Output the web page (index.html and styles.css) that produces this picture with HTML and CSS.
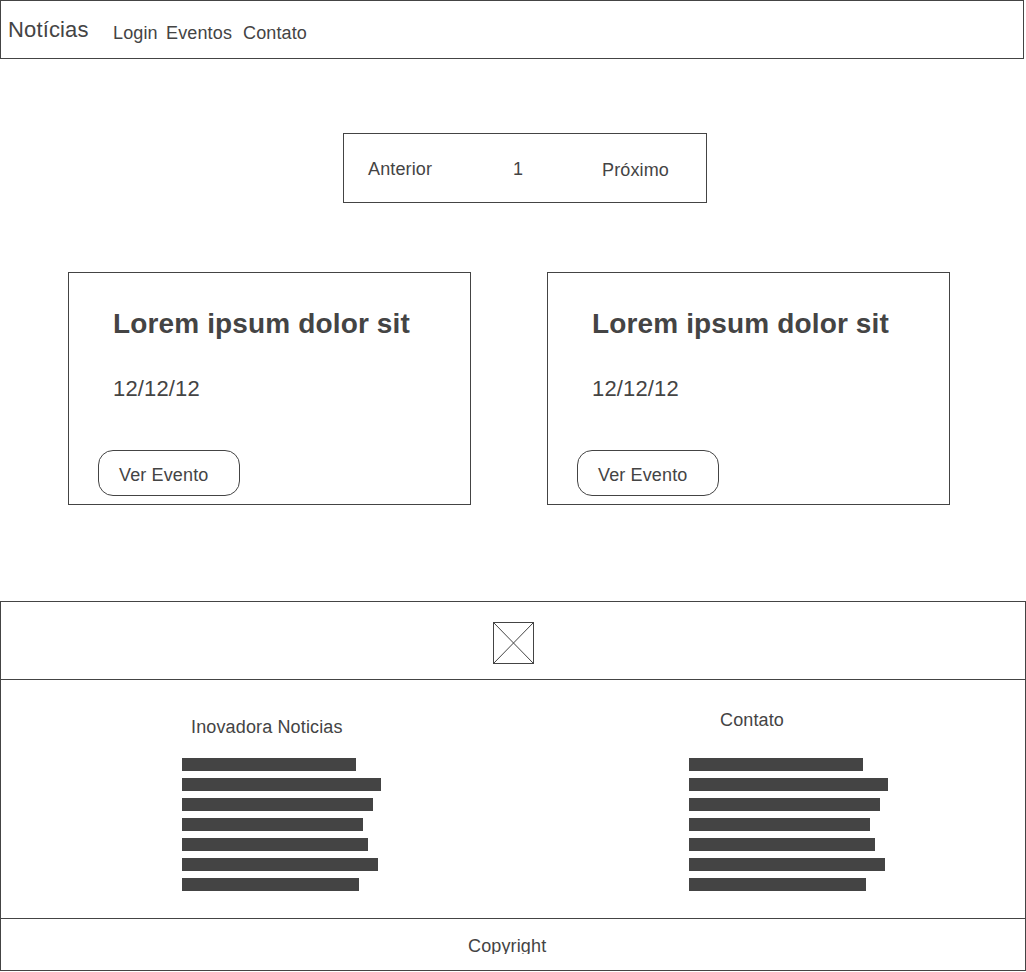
FILE: index.html
```html
<!DOCTYPE html>
<html lang="pt-BR">
<head>
<meta charset="utf-8">
<title>Notícias</title>
<link rel="stylesheet" href="styles.css">
</head>
<body>
<header class="navbar">
  <div class="brand">Notícias</div>
  <nav class="menu">
    <a class="menu-login">Login</a>
    <a class="menu-events">Eventos</a>
    <a class="menu-contact">Contato</a>
  </nav>
</header>
<main>
  <div class="pager">
    <a class="prev">Anterior</a>
    <span class="page">1</span>
    <a class="next">Próximo</a>
  </div>
  <section class="cards">
    <article class="card">
      <h2 class="card-title">Lorem ipsum dolor sit</h2>
      <p class="card-date">12/12/12</p>
      <a class="button">Ver Evento</a>
    </article>
    <article class="card">
      <h2 class="card-title">Lorem ipsum dolor sit</h2>
      <p class="card-date">12/12/12</p>
      <a class="button">Ver Evento</a>
    </article>
  </section>
</main>
<footer class="footer">
  <div class="footer-logo">
    <svg class="logo" width="41" height="42" viewBox="0 0 41 42" fill="none" stroke="#444">
      <rect x=".5" y=".5" width="40" height="41"/>
      <path d="M.5 .5L40.500 41.500M40.500 .5L.5 41.500"/>
    </svg>
  </div>
  <div class="footer-columns">
    <div class="column">
      <h3 class="column-title about">Inovadora Noticias</h3>
      <div class="lines">
        <div class="line" style="width:174px"></div>
        <div class="line" style="width:199px"></div>
        <div class="line" style="width:191px"></div>
        <div class="line" style="width:181px"></div>
        <div class="line" style="width:186px"></div>
        <div class="line" style="width:196px"></div>
        <div class="line" style="width:177px"></div>
      </div>
    </div>
    <div class="column">
      <h3 class="column-title contact">Contato</h3>
      <div class="lines">
        <div class="line" style="width:174px"></div>
        <div class="line" style="width:199px"></div>
        <div class="line" style="width:191px"></div>
        <div class="line" style="width:181px"></div>
        <div class="line" style="width:186px"></div>
        <div class="line" style="width:196px"></div>
        <div class="line" style="width:177px"></div>
      </div>
    </div>
  </div>
  <div class="footer-bottom"><span class="copyright">Copyright</span></div>
</footer>
</body>
</html>
```
FILE: styles.css
```css
* { box-sizing: border-box; }

body {
  margin: 0;
  background: #fff;
  color: #444;
  font: 18px/20px "Liberation Sans", Arial, sans-serif;
  letter-spacing: .14px;
}

h2, h3, p { margin: 0; }

.navbar {
  display: flex;
  width: 1024px;
  height: 59px;
  padding: 16px 7px;
  border: 1px solid #444;
}

.brand {
  width: 105px;
  font-size: 22px;
  line-height: 25px;
}

.menu { display: flex; padding-top: 6px; }
.menu-login { width: 53px; }
.menu-events { width: 77px; }

.pager {
  display: flex;
  width: 364px;
  height: 70px;
  margin: 74px 0 0 343px;
  padding: 25px 24px;
  border: 1px solid #444;
}

.prev { width: 145px; }
.page { width: 89px; }
.next { padding-top: 1px; }

.cards {
  display: flex;
  gap: 76px;
  padding: 69px 0 0 68px;
}

.card {
  width: 403px;
  height: 233px;
  padding: 35px 29px 8px;
  border: 1px solid #444;
}

.card-title {
  padding-left: 15px;
  font-size: 28px;
  line-height: 31px;
}

.card-date {
  padding: 37px 0 0 15px;
  font-size: 22px;
  line-height: 25px;
}

.button {
  display: block;
  width: 142px;
  height: 46px;
  margin-top: 49px;
  padding: 14px 20px;
  border: 1px solid #444;
  border-radius: 15px;
}

.footer {
  height: 370px;
  margin-top: 96px;
  border: 1px solid #444;
}

.footer-logo {
  display: flex;
  justify-content: center;
  height: 78px;
  padding-top: 20px;
  border-bottom: 1px solid #444;
}

.logo { display: block; }

.footer-columns {
  display: flex;
  height: 239px;
  padding-left: 181px;
  border-bottom: 1px solid #444;
}

.column { width: 507px; }
.column:last-child { width: 220px; }

.column-title {
  height: 78px;
  font-size: 18px;
  font-weight: 400;
}

.about { padding: 37px 0 0 9px; }
.contact { padding: 30px 0 0 31px; }

.lines { display: grid; gap: 7px; }
.line { height: 13px; background: #444; }

.footer-bottom { padding: 17px 0 0 467px; }

.copyright {
  display: block;
  height: 18px;
  overflow: hidden;
}
```
